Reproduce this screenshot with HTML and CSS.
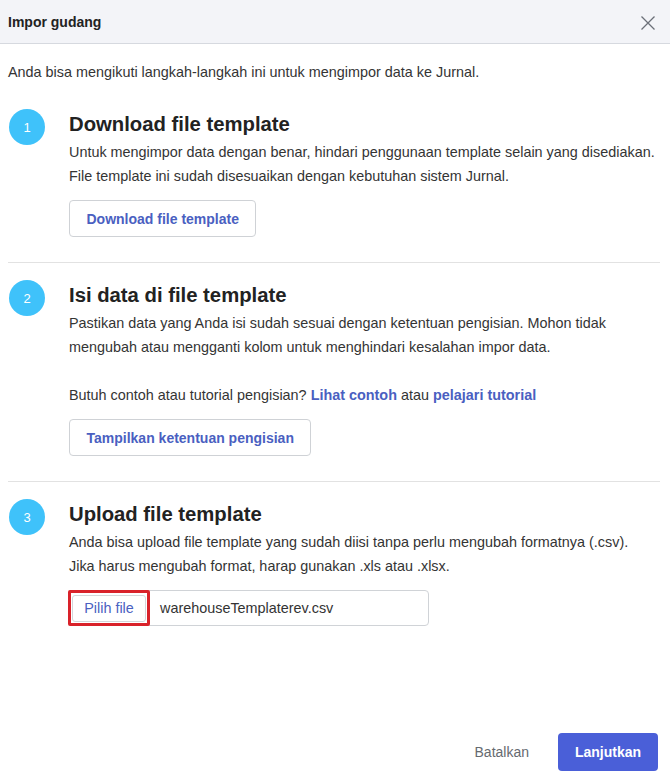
FILE: index.html
```html
<!DOCTYPE html>
<html lang="id">
<head>
<meta charset="utf-8">
<title>Impor gudang</title>
<link rel="stylesheet" href="styles.css">
</head>
<body>
<div class="modal">
  <header class="modal-header">
    <h1 class="modal-title">Impor gudang</h1>
    <button class="close" aria-label="Tutup">
      <svg width="16" height="16" viewBox="0 0 16 16"><path d="M1.5 1.5 L14.5 14.5 M14.5 1.5 L1.5 14.5" stroke="#6b6f78" stroke-width="1.3" fill="none"/></svg>
    </button>
  </header>
  <main class="modal-body">
    <p class="intro">Anda bisa mengikuti langkah-langkah ini untuk mengimpor data ke Jurnal.</p>

    <section class="step">
      <div class="num">1</div>
      <div class="step-content">
        <h2 class="step-title">Download file template</h2>
        <p class="desc">Untuk mengimpor data dengan benar, hindari penggunaan template selain yang disediakan.<br>File template ini sudah disesuaikan dengan kebutuhan sistem Jurnal.</p>
        <button class="btn-outline">Download file template</button>
      </div>
    </section>

    <section class="step">
      <div class="num">2</div>
      <div class="step-content">
        <h2 class="step-title">Isi data di file template</h2>
        <p class="desc">Pastikan data yang Anda isi sudah sesuai dengan ketentuan pengisian. Mohon tidak<br>mengubah atau mengganti kolom untuk menghindari kesalahan impor data.</p>
        <p class="desc gap">Butuh contoh atau tutorial pengisian? <a class="link" href="#">Lihat contoh</a> atau <a class="link" href="#">pelajari tutorial</a></p>
        <button class="btn-outline">Tampilkan ketentuan pengisian</button>
      </div>
    </section>

    <section class="step last">
      <div class="num">3</div>
      <div class="step-content">
        <h2 class="step-title">Upload file template</h2>
        <p class="desc">Anda bisa upload file template yang sudah diisi tanpa perlu mengubah formatnya (.csv).<br>Jika harus mengubah format, harap gunakan .xls atau .xlsx.</p>
        <div class="file-input">
          <span class="pick"><button class="pick-btn">Pilih file</button></span>
          <span class="file-name">warehouseTemplaterev.csv</span>
        </div>
      </div>
    </section>
  </main>
  <footer class="modal-footer">
    <button class="btn-text">Batalkan</button>
    <button class="btn-primary">Lanjutkan</button>
  </footer>
</div>
</body>
</html>
```
FILE: styles.css
```css
* { box-sizing: border-box; }
html, body { margin: 0; padding: 0; background: #fff; }
body {
  font-family: "Liberation Sans", Arial, sans-serif;
  color: #343434;
  font-size: 14.4px;
}
.modal {
  width: 670px;
  height: 784px;
  display: flex;
  flex-direction: column;
}
.modal-header {
  height: 44px;
  background: #f3f4f8;
  border-bottom: 1px solid #d6d9df;
  display: flex;
  align-items: center;
  justify-content: space-between;
  padding: 0 14px 0 8px;
}
.modal-title {
  margin: 0;
  font-size: 14px;
  font-weight: bold;
  color: #222;
}
.close {
  border: 0;
  background: transparent;
  padding: 0;
  width: 16px;
  height: 16px;
  display: flex;
  margin-top: 2px;
}
.modal-body {
  flex: 1;
  padding: 16px 10px 0 8px;
}
.intro {
  margin: 0 0 8px;
  line-height: 24px;
}
.step {
  display: flex;
  gap: 24px;
  padding: 18px 0 25px 1px;
  border-bottom: 1px solid #e2e2e2;
}
.step.last { border-bottom: 0; }
.num {
  width: 36px;
  height: 36px;
  border-radius: 50%;
  background: #3fc2fa;
  color: #fff;
  font-size: 13px;
  display: flex;
  align-items: center;
  justify-content: center;
  flex-shrink: 0;
  margin-top: -1px;
}
.step-content { flex: 1; }
.step-title {
  margin: 0 0 2px;
  font-size: 20.3px;
  line-height: 28px;
  font-weight: bold;
  color: #222;
}
.desc {
  margin: 0;
  line-height: 24px;
}
.desc.gap { margin-top: 24px; }
.link {
  color: #4a5fc1;
  font-weight: bold;
  text-decoration: none;
}
.btn-outline {
  margin-top: 12px;
  height: 37px;
  padding: 0 16.5px;
  background: #fff;
  border: 1px solid #cfd2d6;
  border-radius: 4px;
  font-family: inherit;
  font-size: 14px;
  font-weight: bold;
  color: #4a5fc1;
}
.file-input {
  margin-top: 12px;
  width: 360px;
  height: 36px;
  border: 1px solid #d0d3d7;
  border-radius: 4px;
  display: flex;
  align-items: center;
}
.pick {
  height: 36px;
  margin: -1px 0 -1px -2px;
  border: 3px solid #d9222a;
  border-radius: 2px;
  display: flex;
  align-items: center;
  padding: 0 1px;
}
.pick-btn {
  height: 27px;
  width: 74px;
  background: #fff;
  border: 1px solid #d4d6da;
  border-radius: 3px;
  font-family: inherit;
  font-size: 14.4px;
  color: #4a5fc1;
  padding: 0;
}
.file-name {
  margin-left: 10px;
  color: #333;
}
.modal-footer {
  display: flex;
  justify-content: flex-end;
  align-items: center;
  gap: 29px;
  padding: 0 12px 13px 0;
}
.btn-text {
  border: 0;
  background: transparent;
  font-family: inherit;
  font-size: 14px;
  color: #666a70;
  padding: 0;
}
.btn-primary {
  width: 100px;
  height: 38px;
  border: 0;
  border-radius: 4px;
  background: #4a5fd8;
  color: #fff;
  font-family: inherit;
  font-size: 14px;
  font-weight: bold;
}
```
